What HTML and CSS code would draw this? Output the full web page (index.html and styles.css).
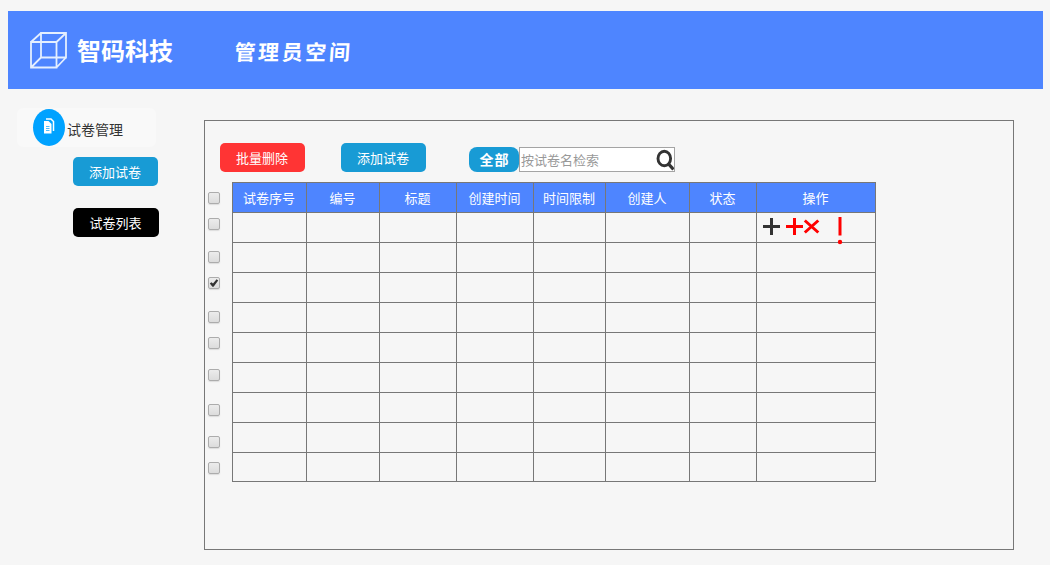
FILE: index.html
```html
<!DOCTYPE html>
<html lang="zh-CN">
<head>
<meta charset="utf-8">
<title>管理员空间</title>
<link rel="stylesheet" href="styles.css">
</head>
<body>
<header class="header">
  <svg class="logo" width="38" height="38" viewBox="0 0 38 38" fill="none" stroke="#e4efff" stroke-width="1.800">
    <path d="M2 11H27.500V36.500H2ZM12 2H37V26.500H12ZM2 11L12 2M27.500 11L37 2M27.500 36.500L37 26.500M2 36.500L12 26.500"/>
  </svg>
  <span class="brand">智码科技</span>
  <h1 class="title">管理员空间</h1>
</header>
<div class="layout">
  <nav class="sidebar">
    <div class="menu-head">
      <span class="menu-icon">
        <svg width="12" height="16" viewBox="0 0 12 16">
          <path d="M3 1H8L10.500 3.500V13" fill="none" stroke="#fff" stroke-width="1.500"/>
          <path d="M1 3H5.500L8.500 6V15.500H1Z" fill="#fff"/>
          <path d="M3 8.500H6.500M3 10.500H6.500M3 12.500H6.500" stroke="#4ebcff"/>
        </svg>
      </span>
      <span class="menu-label">试卷管理</span>
    </div>
    <button class="btn btn-blue side-btn">添加试卷</button>
    <button class="btn btn-black side-btn">试卷列表</button>
  </nav>
  <main class="panel">
    <div class="toolbar">
      <button class="btn btn-red">批量删除</button>
      <button class="btn btn-blue">添加试卷</button>
      <div class="search">
        <button class="scope">全部</button>
        <div class="field">
          <input class="input" type="text" placeholder="按试卷名检索">
          <svg class="lens" width="18" height="22" viewBox="0 0 18 22" fill="none" stroke="#333">
            <ellipse cx="8.300" cy="9.500" rx="6.300" ry="7.200" stroke-width="2.900"/>
            <path d="M12.500 15L17.500 20.500" stroke-width="3.300"/>
          </svg>
        </div>
      </div>
    </div>
    <div class="content">
      <div class="checks">
        <input type="checkbox" class="check">
        <input type="checkbox" class="check near">
        <input type="checkbox" class="check far">
        <input type="checkbox" class="check near" checked>
        <input type="checkbox" class="check gap-34">
        <input type="checkbox" class="check near">
        <input type="checkbox" class="check gap-32">
        <input type="checkbox" class="check gap-35">
        <input type="checkbox" class="check gap-32">
        <input type="checkbox" class="check near">
      </div>
      <table class="grid">
        <colgroup><col class="w74"><col class="w73"><col class="w77"><col class="w77"><col class="w72"><col class="w84"><col class="w67"><col class="w119"></colgroup>
        <thead><tr><th>试卷序号</th><th>编号</th><th>标题</th><th>创建时间</th><th>时间限制</th><th>创建人</th><th>状态</th><th>操作</th></tr></thead>
        <tbody>
          <tr><td></td><td></td><td></td><td></td><td></td><td></td><td></td><td class="actions">
            <svg class="action-icons" width="90" height="30" viewBox="0 0 90 30" fill="none" stroke="#f00" stroke-width="3">
              <path d="M6 13.500H23M14.500 5V22" stroke="#333"/>
              <path d="M29 13.500H46M37.500 5V22"/>
              <path d="M47.800 7.500L61.300 19.500M61.300 7.500L47.800 19.500"/>
              <path d="M83 4V22.500"/>
              <circle cx="83" cy="29" r="2.200" fill="#f00" stroke="none"/>
            </svg>
          </td></tr>
          <tr><td></td><td></td><td></td><td></td><td></td><td></td><td></td><td></td></tr>
          <tr><td></td><td></td><td></td><td></td><td></td><td></td><td></td><td></td></tr>
          <tr><td></td><td></td><td></td><td></td><td></td><td></td><td></td><td></td></tr>
          <tr><td></td><td></td><td></td><td></td><td></td><td></td><td></td><td></td></tr>
          <tr><td></td><td></td><td></td><td></td><td></td><td></td><td></td><td></td></tr>
          <tr><td></td><td></td><td></td><td></td><td></td><td></td><td></td><td></td></tr>
          <tr><td></td><td></td><td></td><td></td><td></td><td></td><td></td><td></td></tr>
          <tr class="last"><td></td><td></td><td></td><td></td><td></td><td></td><td></td><td></td></tr>
        </tbody>
      </table>
    </div>
  </main>
</div>
</body>
</html>
```
FILE: styles.css
```css
* { box-sizing: border-box; }
body {
  margin: 0;
  padding: 11px 7px 0 8px;
  height: 565px;
  overflow: hidden;
  background: #f6f6f6;
  font-family: "Noto Sans CJK SC", sans-serif;
  font-size: 13px;
  color: #333;
}
button, input { font: inherit; margin: 0; }

.header {
  display: flex;
  height: 78px;
  padding: 20px 0 0 21px;
  background: #4e85ff;
  color: #fff;
}
.logo { flex: none; }
.brand {
  margin-left: 10px;
  width: 96px;
  line-height: 37px;
  font-size: 24px;
  font-weight: 700;
  white-space: nowrap;
}
.title {
  margin: 0 0 0 61px;
  line-height: 40px;
  font-size: 21px;
  font-weight: 700;
  letter-spacing: 2.6px;
  transform: skewX(-4deg);
}

.layout { display: flex; }
.sidebar {
  display: flex;
  flex-direction: column;
  align-items: flex-start;
  width: 196px;
  padding: 19px 0 0 9px;
}
.menu-head {
  display: flex;
  width: 139px;
  height: 39px;
  padding: 1px 0 0 16px;
  border-radius: 6px;
  background: #f9f9f9;
}
.menu-icon {
  display: flex;
  align-items: center;
  justify-content: center;
  width: 32px;
  height: 37px;
  padding-bottom: 3px;
  border-radius: 50%;
  background: #00a2ff;
}
.menu-label {
  margin-left: 2px;
  font-size: 14px;
  line-height: 41px;
}
.btn {
  width: 85px;
  height: 29px;
  padding: 0 1px 0 0;
  border: 0;
  border-radius: 5px;
  color: #fff;
  line-height: 28px;
  text-align: center;
}
.btn-blue { background: #189bd5; }
.btn-red { background: #ff3434; }
.btn-black { width: 86px; background: #000; }
.side-btn { margin-left: 56px; }
.side-btn.btn-blue { margin-top: 10px; }
.side-btn.btn-black { margin-top: 22px; }

.panel {
  width: 810px;
  height: 430px;
  margin-top: 31px;
  border: 1px solid #777;
}
.toolbar {
  display: flex;
  gap: 36px;
  height: 61px;
  padding: 22px 0 0 15px;
}
.search { display: flex; margin: 4px 0 0 7px; height: 25px; }
.scope {
  width: 50px;
  padding: 0 0 1px 1px;
  border: 0;
  border-radius: 8px;
  background: #189bd5;
  color: #fff;
  font-size: 14px;
  font-weight: 700;
  letter-spacing: 1px;
  line-height: 23px;
}
.field {
  display: flex;
  width: 156px;
  border: 1px solid #a4a4a4;
  background: #fff;
}
.input {
  flex: 1;
  min-width: 0;
  padding: 0 1px;
  border: 0;
  outline: 0;
  background: transparent;
}
.input::placeholder { color: #999; opacity: 1; }
.lens { flex: none; margin-top: 1px; }

.content { display: flex; }
.checks {
  display: flex;
  flex-direction: column;
  width: 27px;
  padding: 10px 0 0 3px;
}
.check {
  flex: none;
  appearance: none;
  width: 12px;
  height: 12px;
  border: 1px solid #acacac;
  border-radius: 2px;
  background: linear-gradient(#ececec, #dcdcdc);
  box-shadow: 0 1px 1px #ddd;
}
.check:checked::before {
  content: "";
  display: block;
  width: 10px;
  height: 10px;
  background: #333;
  clip-path: polygon(8% 55%, 24% 42%, 40% 54%, 76% 12%, 92% 24%, 46% 88%, 34% 88%);
}
.near { margin-top: 14px; }
.far { margin-top: 21px; }
.gap-34 { margin-top: 22px; }
.gap-32 { margin-top: 20px; }
.gap-35 { margin-top: 23px; }

.grid {
  width: 644px;
  table-layout: fixed;
  border-spacing: 0;
  border: solid #777;
  border-width: 1px 0 0 1px;
}
.w74 { width: 74px; }
.w73 { width: 73px; }
.w77 { width: 77px; }
.w72 { width: 72px; }
.w84 { width: 84px; }
.w67 { width: 67px; }
.w119 { width: 119px; }
.grid th, .grid td {
  height: 30px;
  padding: 0;
  border: solid #777;
  border-width: 0 1px 1px 0;
}
.grid th {
  padding-right: 1px;
  background: #4e85ff;
  color: #fff;
  font-weight: 400;
  line-height: 29px;
}
.grid .last td { height: 29px; }
.grid .actions { position: relative; }
.action-icons {
  position: absolute;
  left: 0;
  top: 0;
  overflow: visible;
}
```
